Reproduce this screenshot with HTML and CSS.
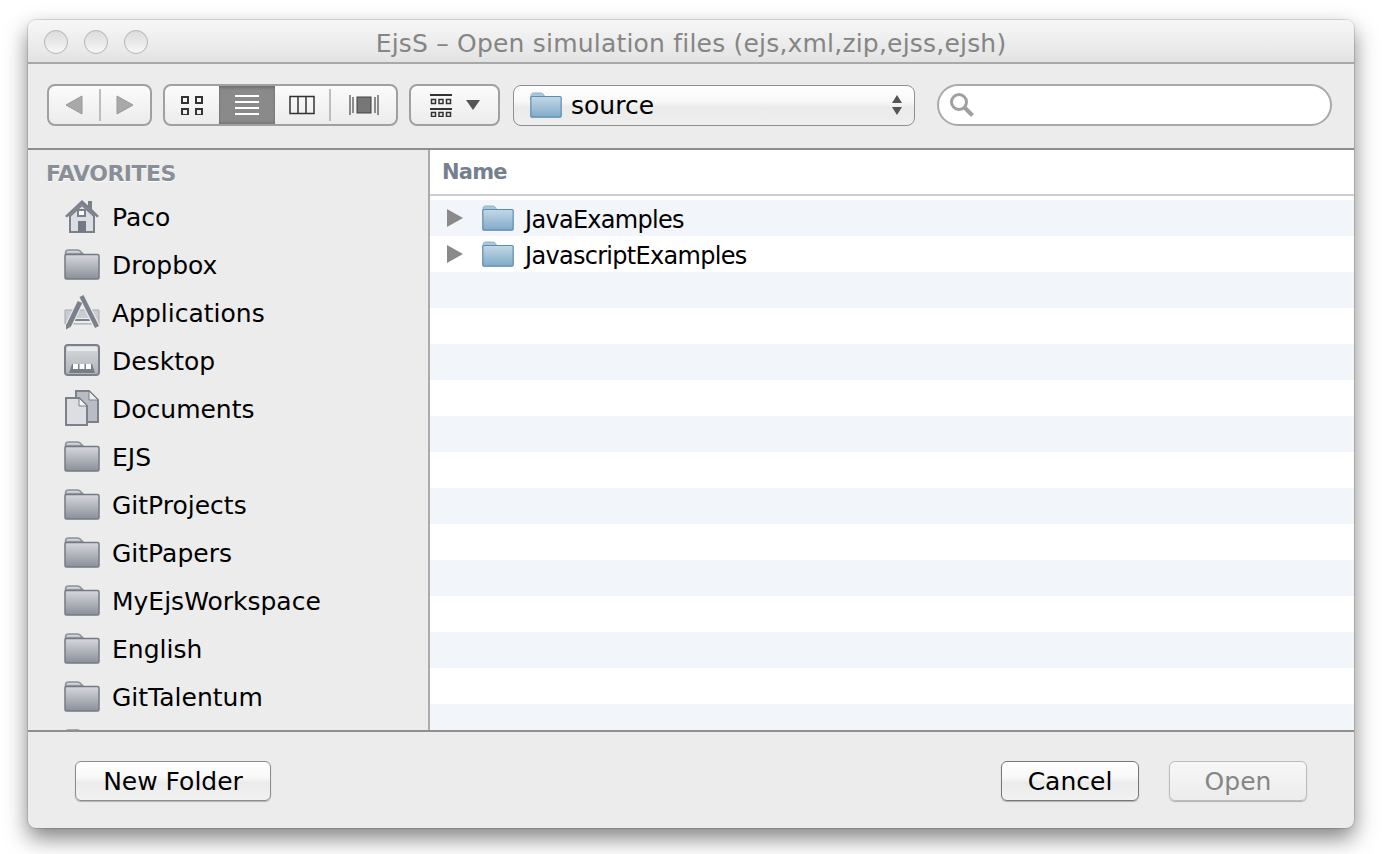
FILE: index.html
```html
<!DOCTYPE html>
<html lang="en">
<head>
    <meta charset="UTF-8">
    <title>EjsS - Open simulation files</title>
    <link rel="stylesheet" href="styles.css">
</head>
<body>
    <svg class="defs" width="0" height="0">
        <defs>
            <linearGradient id="greyFill" x1="0" y1="0" x2="0" y2="1">
                <stop offset="0" stop-color="#d6d8dc"/>
                <stop offset="1" stop-color="#8b9099"/>
            </linearGradient>
            <linearGradient id="blueFill" x1="0" y1="0" x2="0" y2="1">
                <stop offset="0" stop-color="#c4d8e6"/>
                <stop offset="1" stop-color="#7fabc9"/>
            </linearGradient>
            <linearGradient id="tabFill" x1="0" y1="0" x2="0" y2="1">
                <stop offset="0" stop-color="#d8dade"/>
                <stop offset="1" stop-color="#aeb2b8"/>
            </linearGradient>
            <symbol id="folderGrey" viewBox="0 0 36 32">
                <path d="M1.5 9V5c0-2 1-3 3-3h9c2 0 3 .8 4.500 3l1 1H1.500z" fill="url(#tabFill)" stroke="#8b9099" stroke-width="1.500"/>
                <rect x="1" y="6.500" width="34" height="24.500" rx="1.500" fill="url(#greyFill)" stroke="#747a84" stroke-width="1.500"/>
            </symbol>
            <symbol id="folderBlue" viewBox="0 0 32 26">
                <path d="M1 8V3.500C1 2 2 1 3.500 1h7c1.800 0 2.500.6 3.700 2.500l.8 1.500H1z" fill="#a9c6da" stroke="#8cb0c8"/>
                <rect x=".8" y="4.500" width="30.400" height="20.700" rx="1.200" fill="url(#blueFill)" stroke="#5f8cab" stroke-width="1.200"/>
            </symbol>
        </defs>
    </svg>

    <div class="window">
        <div class="titlebar">
            <div class="lights">
                <span class="light"></span>
                <span class="light"></span>
                <span class="light"></span>
            </div>
            <div class="title">EjsS – Open simulation files (ejs,xml,zip,ejss,ejsh)</div>
        </div>

        <div class="toolbar">
            <div class="btn group nav">
                <span class="seg">
                    <svg width="18" height="20" viewBox="0 0 18 20"><path d="M17 1v18L1 10z" fill="#a9a9a9" stroke="#999"/></svg>
                </span>
                <span class="rule"></span>
                <span class="seg">
                    <svg width="18" height="20" viewBox="0 0 18 20"><path d="M1 1v18l16-9z" fill="#a9a9a9" stroke="#999"/></svg>
                </span>
            </div>

            <div class="btn group views">
                <span class="seg view-first">
                    <svg width="24" height="20" viewBox="0 0 24 20" fill="none" stroke="#333" stroke-width="2">
                        <rect x="2" y="2" width="6" height="6"/><rect x="16" y="2" width="6" height="6"/>
                        <rect x="2" y="14" width="6" height="6"/><rect x="16" y="14" width="6" height="6"/>
                    </svg>
                </span>
                <span class="seg view-list">
                    <svg width="24" height="22" viewBox="0 0 24 22" fill="#fff">
                        <rect y="1" width="24" height="2"/><rect y="7" width="24" height="2"/>
                        <rect y="13" width="24" height="2"/><rect y="19" width="24" height="2"/>
                    </svg>
                </span>
                <span class="seg view-cols">
                    <svg width="26" height="20" viewBox="0 0 26 20" fill="none" stroke="#333" stroke-width="1.500">
                        <rect x="1" y="1.500" width="24" height="17"/><path d="M9 1.500v17M17 1.500v17"/>
                    </svg>
                </span>
                <span class="rule"></span>
                <span class="seg view-flow">
                    <svg width="30" height="20" viewBox="0 0 30 20">
                        <path d="M1 0v20M4 2v16M26 2v16M29 0v20" stroke="#555" stroke-width="1.300"/>
                        <rect x="8" y="2" width="14" height="16" fill="#777" stroke="#444"/>
                    </svg>
                </span>
            </div>

            <div class="btn arrange">
                <svg width="22" height="23" viewBox="0 0 22 23" fill="none" stroke="#333">
                    <path d="M0 1h22M0 15h22" stroke-width="2"/>
                    <path d="M1.500 5.500h4v4h-4zM9 5.500h4v4H9zM16.500 5.500h4v4h-4zM1.500 18.500h4v4h-4zM9 18.500h4v4H9zM16.500 18.500h4v4h-4z" stroke-width="1.500"/>
                </svg>
                <svg width="14" height="10" viewBox="0 0 14 10"><path d="M0 0h14L7 10z" fill="#555"/></svg>
            </div>

            <div class="btn popup">
                <svg class="popup-icon" width="32" height="26"><use href="#folderBlue"/></svg>
                <span class="popup-label">source</span>
                <svg class="stepper" width="10" height="20" viewBox="0 0 10 20" fill="#555">
                    <path d="M5 0l5 8H0zM5 20L0 12h10z"/>
                </svg>
            </div>

            <div class="search">
                <svg width="26" height="26" viewBox="0 0 26 26" fill="none" stroke="#a0a0a0">
                    <circle cx="10" cy="10" r="7.500" stroke-width="3"/>
                    <path d="M15.500 15.500l8 8" stroke-width="4"/>
                </svg>
            </div>
        </div>

        <div class="main">
            <div class="sidebar">
                <div class="side-head">FAVORITES</div>
                <ul class="side-list">
                    <li>
                        <svg width="36" height="36" viewBox="0 0 36 36">
                            <path d="M1 18L18 2l6 5.500V3h4v8l7 7-2 1.500L18 6 3 19.500z" fill="#7b818b"/>
                            <path d="M6 18L18 7l12 11v16H6z" fill="#dcdee1" stroke="#7b818b" stroke-width="2"/>
                            <rect x="14" y="12" width="7" height="6" fill="#fff" stroke="#7b818b" stroke-width="2"/>
                            <rect x="14" y="23" width="8" height="11" fill="#737984"/>
                        </svg>
                        Paco
                    </li>
                    <li><svg width="36" height="32"><use href="#folderGrey"/></svg>Dropbox</li>
                    <li>
                        <svg width="36" height="36" viewBox="0 0 36 36">
                            <path d="M1 16h34v14H1z" fill="#c9ccd0" stroke="#a5a9b0"/>
                            <path d="M8 26.500h20" stroke="#ececec" stroke-width="5"/>
                            <path d="M8 26h20" stroke="#7b818b" stroke-width="2"/>
                            <path d="M17.500 2l15.500 31" stroke="#ececec" stroke-width="7"/>
                            <path d="M17.500 2l15.500 31" stroke="#7b818b" stroke-width="4.500"/>
                            <path d="M16 8L4 33" stroke="#ececec" stroke-width="7"/>
                            <path d="M16 8L4.500 32" stroke="#7b818b" stroke-width="5"/>
                            <path d="M2 30l4.500 3L2 35.500z" fill="#7b818b"/>
                        </svg>
                        Applications
                    </li>
                    <li>
                        <svg width="36" height="32" viewBox="0 0 36 32">
                            <rect x="1" y="1" width="34" height="30" rx="3" fill="url(#tabFill)" stroke="#7b818b" stroke-width="2"/>
                            <rect x="3" y="3" width="30" height="4" fill="#e8e9eb"/>
                            <path d="M8 20h20l3 9H5z" fill="#777d87"/>
                            <rect x="9" y="20" width="5" height="5" fill="#fff"/>
                            <rect x="15.500" y="20" width="5" height="5" fill="#fff"/>
                            <rect x="22" y="20" width="5" height="5" fill="#fff"/>
                        </svg>
                        Desktop
                    </li>
                    <li>
                        <svg width="36" height="36" viewBox="0 0 36 36">
                            <path d="M12 1h13l9 9v22H12z" fill="#b9bcc2" stroke="#7b818b" stroke-width="2"/>
                            <path d="M25 1l9 9h-9z" fill="#eceded" stroke="#7b818b"/>
                            <path d="M2 8h13l8 8v19H2z" fill="#dcdee1" stroke="#7b818b" stroke-width="2"/>
                            <path d="M15 8l8 8h-8z" fill="#f5f5f5" stroke="#7b818b"/>
                        </svg>
                        Documents
                    </li>
                    <li><svg width="36" height="32"><use href="#folderGrey"/></svg>EJS</li>
                    <li><svg width="36" height="32"><use href="#folderGrey"/></svg>GitProjects</li>
                    <li><svg width="36" height="32"><use href="#folderGrey"/></svg>GitPapers</li>
                    <li><svg width="36" height="32"><use href="#folderGrey"/></svg>MyEjsWorkspace</li>
                    <li><svg width="36" height="32"><use href="#folderGrey"/></svg>English</li>
                    <li><svg width="36" height="32"><use href="#folderGrey"/></svg>GitTalentum</li>
                    <li><svg width="36" height="32"><use href="#folderGrey"/></svg></li>
                </ul>
            </div>

            <div class="files">
                <div class="files-head">Name</div>
                <div class="rows">
                    <div class="row">
                        <svg class="twist" width="16" height="18" viewBox="0 0 16 18"><path d="M0 0l16 9-16 9z" fill="#8a8a8a"/></svg>
                        <svg width="32" height="26"><use href="#folderBlue"/></svg>
                        <span>JavaExamples</span>
                    </div>
                    <div class="row">
                        <svg class="twist" width="16" height="18" viewBox="0 0 16 18"><path d="M0 0l16 9-16 9z" fill="#8a8a8a"/></svg>
                        <svg width="32" height="26"><use href="#folderBlue"/></svg>
                        <span>JavascriptExamples</span>
                    </div>
                </div>
            </div>
        </div>

        <div class="footer">
            <button class="push">New Folder</button>
            <div class="footer-right">
                <button class="push wide dark">Cancel</button>
                <button class="push wide" disabled>Open</button>
            </div>
        </div>
    </div>
</body>
</html>
```

FILE: styles.css
```css
html, body {
    height: 100%;
}
body {
    font-family: "DejaVu Sans", "Noto Sans", sans-serif;
    background-color: #fff;
    margin: 0;
    padding: 20px 28px 0;
    box-sizing: border-box;
    color: #000;
    overflow: hidden;
}
.defs {
    position: absolute;
}
.window {
    width: 1326px;
    height: 808px;
    display: flex;
    flex-direction: column;
    background: #ececec;
    border-radius: 8px;
    box-shadow: 0 0 0 1px rgba(0, 0, 0, 0.12), 0 10px 22px rgba(0, 0, 0, 0.5);
    overflow: hidden;
}

/* title bar */
.titlebar {
    height: 44px;
    box-sizing: border-box;
    display: flex;
    align-items: center;
    padding-left: 16px;
    background: linear-gradient(#f7f7f7, #e3e3e3);
    border-bottom: 2px solid #a8a8a8;
}
.lights {
    display: flex;
    gap: 16px;
    width: 104px;
    margin-top: 2px;
}
.light {
    width: 24px;
    height: 24px;
    box-sizing: border-box;
    border-radius: 50%;
    border: 1px solid #b4b4b4;
    background: linear-gradient(#dcdcdc, #f6f6f6);
}
.title {
    flex: 1;
    text-align: center;
    padding: 5px 120px 0 0;
    font-size: 25px;
    letter-spacing: 0.2px;
    color: #858585;
}

/* toolbar */
.toolbar {
    height: 86px;
    box-sizing: border-box;
    display: flex;
    align-items: center;
    padding: 0 22px 2px 19px;
    border-bottom: 2px solid #8e8e8e;
}
.btn {
    height: 42px;
    box-sizing: border-box;
    display: flex;
    align-items: center;
    border: 2px solid #a0a0a0;
    border-radius: 8px;
    background: linear-gradient(#fbfbfb, #ececec);
    overflow: hidden;
}
.seg {
    display: flex;
    align-items: center;
    justify-content: center;
    height: 100%;
}
.rule {
    width: 2px;
    height: 32px;
    background: #bdbdbd;
    flex: none;
}
.nav {
    width: 105px;
    margin-right: 11px;
}
.nav .seg {
    flex: 1;
}
.views {
    width: 235px;
    margin-right: 11px;
}
.view-first {
    width: 54px;
}
.view-list {
    width: 56px;
    background: #8a8a8a;
    box-shadow: inset 0 2px 3px rgba(0, 0, 0, 0.2), inset 0 -2px 2px rgba(0, 0, 0, 0.1);
}
.view-cols {
    width: 54px;
}
.view-flow {
    flex: 1;
}
.arrange {
    width: 91px;
    margin-right: 13px;
    justify-content: center;
    gap: 14px;
}
.popup {
    width: 402px;
    height: 41px;
    margin-right: 22px;
    padding: 0 12px 0 16px;
    gap: 9px;
    border-width: 1px;
    border-color: #8f8f8f;
    background: linear-gradient(#fff 0%, #f8f8f8 40%, #ebebeb 55%, #eee 100%);
}
.popup-label {
    flex: 1;
    font-size: 25px;
}
.search {
    flex: 1;
    height: 42px;
    box-sizing: border-box;
    display: flex;
    align-items: center;
    padding-left: 10px;
    background: #fff;
    border: 2px solid #a9a9a9;
    border-radius: 21px;
}

/* sidebar and list */
.main {
    flex: 1;
    min-height: 0;
    display: flex;
}
.sidebar {
    width: 402px;
    flex: none;
    box-sizing: border-box;
    border-right: 2px solid #ababab;
    overflow: hidden;
    background: #ececec;
}
.side-head {
    padding: 12px 0 0 18px;
    height: 31px;
    font-size: 22px;
    line-height: 24px;
    font-weight: bold;
    letter-spacing: -0.5px;
    color: #8a8f97;
    text-shadow: 0 1px 0 #fff;
}
.side-list {
    list-style: none;
    margin: 0;
    padding: 0 0 0 36px;
}
.side-list li {
    height: 48px;
    display: flex;
    align-items: center;
    gap: 12px;
    font-size: 25px;
}
.side-list svg {
    margin-top: -2px;
}
.files {
    flex: 1;
    display: flex;
    flex-direction: column;
    background: #fff;
}
.files-head {
    height: 46px;
    box-sizing: border-box;
    padding: 9px 0 0 12px;
    font-size: 21px;
    line-height: 26px;
    font-weight: bold;
    letter-spacing: -0.8px;
    color: #75808f;
    border-bottom: 2px solid #cecece;
}
.rows {
    flex: 1;
    margin-top: 4px;
    background: repeating-linear-gradient(#f2f5fa 0 36px, #fff 36px 72px);
}
.row {
    height: 36px;
    display: flex;
    align-items: center;
    padding-left: 17px;
    font-size: 24px;
    letter-spacing: -0.7px;
}
.twist {
    margin-right: 19px;
}
.row span {
    margin: 4px 0 0 11px;
}

/* footer */
.footer {
    height: 98px;
    box-sizing: border-box;
    display: flex;
    justify-content: space-between;
    align-items: flex-start;
    padding: 29px 47px 0;
    border-top: 2px solid #8f8f8f;
}
.footer-right {
    display: flex;
    gap: 30px;
}
.push {
    width: 196px;
    height: 40px;
    padding: 0;
    font-family: inherit;
    font-size: 25px;
    color: #000;
    border: 1px solid #8c8c8c;
    border-radius: 6px;
    background: linear-gradient(#fff 0%, #f8f8f8 40%, #ebebeb 55%, #f2f2f2 100%);
    box-shadow: 0 1px 1px rgba(0, 0, 0, 0.25);
}
.wide {
    width: 138px;
}
.dark {
    border-color: #777;
}
.push:disabled {
    color: #858585;
    border-color: #bcbcbc;
    background: linear-gradient(#f7f7f7, #ececec);
}
```
